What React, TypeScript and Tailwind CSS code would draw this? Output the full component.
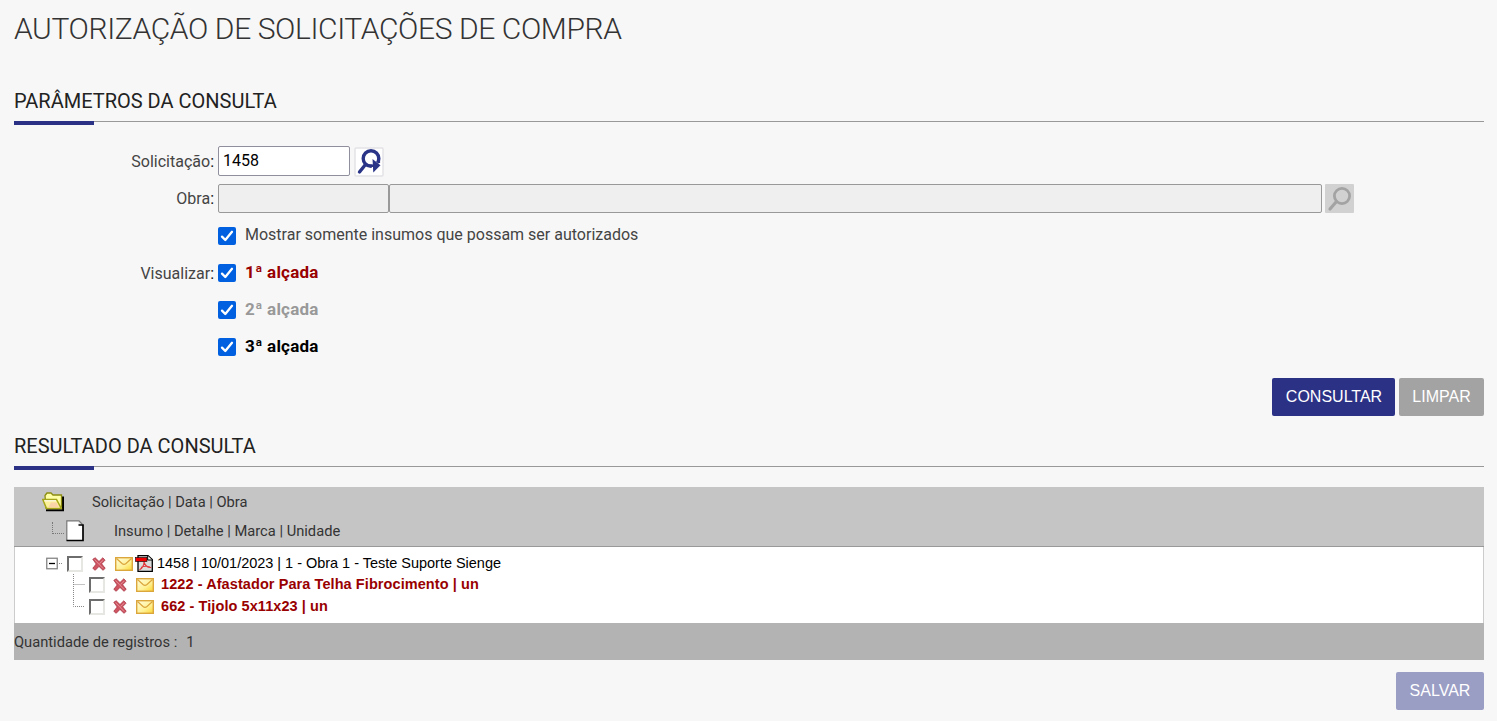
import React, { useState } from 'react';

interface Insumo {
  id: number;
  label: string;
}

interface Alcada {
  id: number;
  label: string;
  className: string;
}

const ALCADAS: Alcada[] = [
  { id: 1, label: '1ª alçada', className: 'text-[#990000]' },
  { id: 2, label: '2ª alçada', className: 'text-[#999999]' },
  { id: 3, label: '3ª alçada', className: 'text-black' },
];

const INSUMOS: Insumo[] = [
  { id: 1222, label: '1222 - Afastador Para Telha Fibrocimento | un' },
  { id: 662, label: '662 - Tijolo 5x11x23 | un' },
];

// --- Icons ---

const SearchGoIcon = () => (
  <svg width="30" height="30" viewBox="0 0 30 30" className="block shrink-0 mt-[2px]">
    <rect x="1" y="1" width="28" height="28" rx="1" fill="#fff" stroke="#e3e3e6" strokeWidth="1.5" />
    <circle cx="17" cy="11.5" r="7.8" fill="none" stroke="#2b3588" strokeWidth="3.4" />
    <path d="M11.5 17.5 5.5 25" stroke="#2b3588" strokeWidth="3.4" strokeLinecap="round" />
    <path d="M17.5 11.5 27.5 18.5 18 26Z" fill="#fff" />
    <path d="M18.5 12 26.5 18.3 19.3 25.5Z" fill="#2b3588" />
    <path d="M14 18.7H21" stroke="#2b3588" strokeWidth="2.6" />
    <path d="M24.8 11.5V16" stroke="#2b3588" strokeWidth="2.6" />
  </svg>
);

const SearchOffIcon = () => (
  <svg width="29" height="29" viewBox="0 0 29 29" className="block shrink-0">
    <rect width="29" height="29" rx="1" fill="#d1d1d1" />
    <circle cx="17" cy="12" r="7.6" fill="none" stroke="#a3a3a3" strokeWidth="2.8" />
    <path d="M11.5 17.5 5 25" stroke="#a3a3a3" strokeWidth="3.2" strokeLinecap="round" />
  </svg>
);

const FolderIcon = () => (
  <svg width="23" height="20" viewBox="0 0 23 20" className="block">
    <path d="M4 18.2H21V4.5" fill="none" stroke="#000" strokeWidth="2" />
    <path d="M3 3.5 5 1H9L11 3H19.5V15L4 16Z" fill="#ffffa5" stroke="#8c8c10" strokeWidth="1.3" />
    <path d="M.8 7.5H14.5L19.3 16.5H4.5Z" fill="#fcf19b" stroke="#a5a51a" strokeWidth="1.5" />
    <path d="M9 10.5H14.5L17 15.5H6Z" fill="#fbd3a8" />
    <path d="M2.2 8.8H14" stroke="#fff" strokeWidth="1" />
  </svg>
);

const PageIcon = () => (
  <svg width="19" height="22" viewBox="0 0 19 22" className="block">
    <path d="M.8 21V1H13L17 5.5V20.5H.8" fill="#fff" />
    <path d="M12.5.8V5H17Z" fill="#e2e2e2" />
    <path d="M.8 20.5V.8H13L16.5 4.5" fill="none" stroke="#777" strokeWidth="1.2" />
    <path d="M.5 20.5H17V5H12.5" fill="none" stroke="#000" strokeWidth="1.7" />
  </svg>
);

const DeleteIcon = () => (
  <svg width="14" height="14" viewBox="0 0 14 14" className="block shrink-0">
    <path
      d="M.8 2.3 3.2.8 7 4.5 10.8.8 13 3.2 9.6 6.8 13.2 11.3 11 13.3 7 9.4 3.2 13.3.8 11.3 4.2 7Z"
      fill="#cf5563"
      stroke="#a83543"
      strokeWidth=".8"
    />
    <path d="M2.5 2.5 11 11.3M11.3 3 7.5 6.5" stroke="#e08b93" strokeWidth="1" />
  </svg>
);

const MailIcon = () => (
  <svg width="18" height="14" viewBox="0 0 18 14" className="block shrink-0">
    <defs>
      <linearGradient id="mail" x1="0" y1="0" x2="1" y2="1">
        <stop offset="0" stopColor="#fffde0" />
        <stop offset=".6" stopColor="#fff194" />
        <stop offset="1" stopColor="#fbd52d" />
      </linearGradient>
    </defs>
    <rect x=".7" y=".7" width="16.6" height="12.6" fill="url(#mail)" stroke="#dba63c" strokeWidth="1.4" />
    <path d="M1.5 1.5 7 6.5Q9 8.2 11 6.5L16.5 1.5" fill="none" stroke="#dba63c" strokeWidth="1.2" />
  </svg>
);

const PdfIcon = () => (
  <svg width="19" height="17" viewBox="0 0 19 17" className="block shrink-0">
    <path d="M3 .7H13L17.3 4.5V16.3H3Z" fill="#dcdcdc" stroke="#000" strokeWidth="1.3" />
    <path d="M12.7.8V5H17" fill="#fff" stroke="#000" strokeWidth="1" />
    <path d="M9 6.5C9.5 10 7 13.5 4.5 14.8M9 7C10 10.5 13 12.7 16.3 12.5M6 12.5C8.5 11 12 11 15 12" fill="none" stroke="#e0353b" strokeWidth="1.2" />
    <rect x=".5" y="2.5" width="11.5" height="4" fill="#f00000" stroke="#000" strokeWidth=".6" />
  </svg>
);

const MinusBox = () => (
  <svg width="17" height="13" viewBox="0 0 17 13" className="block shrink-0">
    <rect x=".75" y="1.25" width="10.5" height="10.5" fill="#fff" stroke="#858585" strokeWidth="1.3" />
    <path d="M3 6.5H9" stroke="#000" strokeWidth="1.3" />
    <path d="M13 6.5H17" stroke="#888" strokeDasharray="1 1" />
  </svg>
);

// --- Form pieces ---

const SectionTitle = ({ children }: { children: React.ReactNode }) => (
  <div className="h-[35px] border-b border-[#999999] relative">
    <h2 className="text-[20px] leading-[29px] text-[#222222]">{children}</h2>
    <span className="absolute left-0 top-[34px] w-20 h-1 bg-[#2b3286]" />
  </div>
);

const BlueCheck = ({ checked, onChange }: { checked: boolean; onChange: () => void }) => (
  <button
    type="button"
    role="checkbox"
    aria-checked={checked}
    onClick={onChange}
    className={`w-[18px] h-[18px] shrink-0 rounded-[2px] ${checked ? 'bg-[#0060df]' : 'bg-white border border-gray-500'}`}
  >
    {checked && (
      <svg width="18" height="18" viewBox="0 0 18 18" className="block">
        <path d="M4 9.6 7.3 13 14 4.8" fill="none" stroke="#fff" strokeWidth="2.3" strokeLinecap="round" strokeLinejoin="round" />
      </svg>
    )}
  </button>
);

const TreeCheck = () => (
  <span className="block shrink-0 w-4 h-4 bg-white border-2 border-t-[#6d6d6d] border-l-[#6d6d6d] border-b-[#e6e6e2] border-r-[#e6e6e2]" />
);

const Label = ({ children, className = 'pt-[2px]' }: { children?: React.ReactNode; className?: string }) => (
  <span className={`w-[200px] mr-1 shrink-0 text-right text-[16px] leading-6 text-[#444444] ${className}`}>
    {children}
    {children && <span className="text-[#111111]">:</span>}
  </span>
);

const App: React.FC = () => {
  const [solicitacao, setSolicitacao] = useState('1458');
  const [somente, setSomente] = useState(true);
  const [selected, setSelected] = useState<number[]>([1, 2, 3]);

  const toggle = (id: number) => {
    setSelected(prev => prev.includes(id) ? prev.filter(s => s !== id) : [...prev, id]);
  };

  return (
    <div className="h-[721px] bg-[#f7f7f7] pl-[14px] pr-[13px] overflow-hidden font-[Roboto,sans-serif]">
      <h1 className="pt-[9px] h-[87px] text-[30px] leading-10 font-light tracking-[-0.39px] text-[#333333]">
        <span className="whitespace-nowrap">AUTORIZAÇÃO DE SOLICITAÇÕES DE COMPRA</span>
      </h1>

      <SectionTitle>PARÂMETROS DA CONSULTA</SectionTitle>

      {/* Parameters */}
      <div className="pt-6">
        <div className="flex items-center h-[30px]">
          <Label>Solicitação</Label>
          <input
            value={solicitacao}
            onChange={e => setSolicitacao(e.target.value)}
            className="w-[132px] h-[30px] pl-1 pb-[2px] mr-1 text-[16px] text-black bg-white border border-[#8f8f9d] rounded-[2px]"
          />
          <SearchGoIcon />
        </div>
        <div className="flex items-center h-[29px] mt-2">
          <Label className="pt-px">Obra</Label>
          <input disabled className="w-[171px] h-[29px] bg-[#efefef] border border-[#999999] rounded-[2px]" />
          <input disabled className="w-[933px] h-[29px] mr-[3px] bg-[#efefef] border border-[#999999] rounded-[2px]" />
          <SearchOffIcon />
        </div>
        <div className="flex items-center h-[37px] mt-1">
          <Label />
          <BlueCheck checked={somente} onChange={() => setSomente(!somente)} />
          <span className="ml-[9px] pb-px text-[16px] leading-6 text-[#444444]">Mostrar somente insumos que possam ser autorizados</span>
        </div>
        {ALCADAS.map(a => (
          <div key={a.id} className="flex items-center h-[37px]">
            <Label>{a.id === 1 ? 'Visualizar' : undefined}</Label>
            <BlueCheck checked={selected.includes(a.id)} onChange={() => toggle(a.id)} />
            <span className={`ml-[9px] pb-px text-[17px] leading-6 tracking-[0.2px] font-bold ${a.className}`}>{a.label}</span>
          </div>
        ))}
      </div>

      <div className="flex justify-end gap-1 mt-[13px] text-[16px] text-white font-['Liberation_Sans',Arial,sans-serif]">
        <button className="w-[123px] h-[38px] pl-px rounded-[2px] bg-[#2b3286]">CONSULTAR</button>
        <button className="w-[85px] h-[38px] rounded-[2px] bg-[#a3a3a3]">LIMPAR</button>
      </div>

      <div className="h-4" />
      <SectionTitle>RESULTADO DA CONSULTA</SectionTitle>

      {/* Result tree */}
      <div className="mt-5">
        <div className="h-[60px] bg-[#c5c5c5] border-b border-[#999999] text-[14.7px] text-[#333333]">
          <div className="flex items-center h-[29px] pl-7">
            <FolderIcon />
            <span className="ml-[27px] pt-[2px]">Solicitação | Data | Obra</span>
          </div>
          <div className="flex items-center h-[30px] pl-[38px]">
            <span className="w-3 h-[12px] mr-[2px] mb-[7px] border-l border-b border-dotted border-[#777777]" />
            <PageIcon />
            <span className="ml-[29px]">Insumo | Detalhe | Marca | Unidade</span>
          </div>
        </div>
        <div className="h-[76px] pt-[6px] bg-white border-x border-[#cccccc] text-[14.5px] font-['Liberation_Sans',Arial,sans-serif]">
          <div className="flex items-center h-[21px] pl-[31px] text-black">
            <MinusBox />
            <span className="ml-[4px]"><TreeCheck /></span>
            <span className="ml-[9px]"><DeleteIcon /></span>
            <span className="ml-[9px]"><MailIcon /></span>
            <span className="ml-[2px]"><PdfIcon /></span>
            <span className="ml-[3px] whitespace-nowrap tracking-[-0.02px]">1458 | 10/01/2023 | 1 - Obra 1 - Teste Suporte Sienge</span>
          </div>
          {INSUMOS.map((i, index) => (
            <div key={i.id} className="flex items-center h-[22px] pl-[58px]">
              <svg width="16" height="22" viewBox="0 0 16 22" className="block shrink-0">
                <path d={index === INSUMOS.length - 1 ? 'M.5 0V10.5H12' : 'M.5 0V22M.5 10.5H12'} fill="none" stroke="#888" strokeDasharray="1 1" />
              </svg>
              <TreeCheck />
              <span className="ml-[8px]"><DeleteIcon /></span>
              <span className="ml-[9px]"><MailIcon /></span>
              <span className="ml-[7px] pb-px font-bold text-[#990000] whitespace-nowrap tracking-[0.08px]">{i.label}</span>
            </div>
          ))}
        </div>
        <div className="flex items-center h-[37px] pt-px bg-[#b3b3b3] text-[14.7px] text-[#333333]">
          <span>Quantidade de registros :</span>
          <span className="ml-[9px]">1</span>
        </div>
      </div>

      <div className="flex justify-end mt-3 text-[16px] text-white font-['Liberation_Sans',Arial,sans-serif]">
        <button className="w-[88px] h-[38px] rounded-[2px] bg-[#9a9dc4]">SALVAR</button>
      </div>
    </div>
  );
};

export default App;
